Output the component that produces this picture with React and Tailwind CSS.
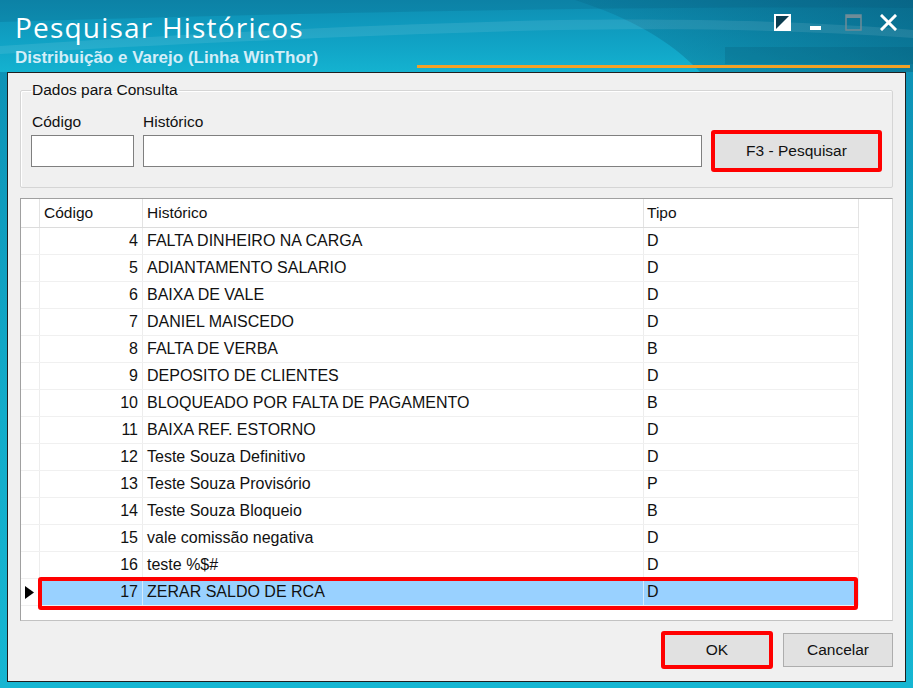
import React from 'react'

const historicos = [
  { cod: 4, desc: 'FALTA DINHEIRO NA CARGA', tipo: 'D' },
  { cod: 5, desc: 'ADIANTAMENTO SALARIO', tipo: 'D' },
  { cod: 6, desc: 'BAIXA DE VALE', tipo: 'D' },
  { cod: 7, desc: 'DANIEL MAISCEDO', tipo: 'D' },
  { cod: 8, desc: 'FALTA DE VERBA', tipo: 'B' },
  { cod: 9, desc: 'DEPOSITO DE CLIENTES', tipo: 'D' },
  { cod: 10, desc: 'BLOQUEADO POR FALTA DE PAGAMENTO', tipo: 'B' },
  { cod: 11, desc: 'BAIXA REF. ESTORNO', tipo: 'D' },
  { cod: 12, desc: 'Teste Souza Definitivo', tipo: 'D' },
  { cod: 13, desc: 'Teste Souza Provisório', tipo: 'P' },
  { cod: 14, desc: 'Teste Souza Bloqueio', tipo: 'B' },
  { cod: 15, desc: 'vale comissão negativa', tipo: 'D' },
  { cod: 16, desc: 'teste %$#', tipo: 'D' },
  { cod: 17, desc: 'ZERAR SALDO DE RCA', tipo: 'D' },
]

const selectedCod = 17

function TitleBar() {
  return (
    <div className="relative h-[72px] shrink-0 overflow-hidden">
      {/* faixa azul com os "swooshes" do tema */}
      <svg className="absolute inset-0" width="913" height="72" viewBox="0 0 913 72">
        <defs>
          <linearGradient id="tbBase" x1="0" y1="0" x2="0" y2="1">
            <stop offset="0" stopColor="#0e8db2" />
            <stop offset="0.55" stopColor="#10a1c4" />
            <stop offset="1" stopColor="#14b2d0" />
          </linearGradient>
          <linearGradient id="tbDark" x1="0" y1="0" x2="1" y2="0">
            <stop offset="0" stopColor="#05506f" stopOpacity="0.15" />
            <stop offset="1" stopColor="#05506f" stopOpacity="0.55" />
          </linearGradient>
        </defs>
        <rect width="913" height="72" fill="url(#tbBase)" />
        <path d="M575 0 C 630 18, 670 40, 700 72 L913 72 L913 0 Z" fill="url(#tbDark)" />
        <path d="M0 46 C 180 34, 380 24, 560 20 C 700 18, 820 22, 913 30 L913 38 C 800 30, 690 28, 560 30 C 380 34, 180 44, 0 54 Z" fill="#ffffff" opacity="0.09" />
        <path d="M0 0 L913 0 L913 8 C 700 6, 400 10, 0 22 Z" fill="#04506e" opacity="0.18" />
        <rect x="725" y="47" width="188" height="17" fill="#06506e" opacity="0.22" />
      </svg>

      <div className="relative flex justify-between">
        <div className="pl-[15px] pt-[13px]">
          <h1 className="text-[28px] leading-[28px] text-white tracking-[1.2px] font-['Open_Sans',sans-serif]">
            Pesquisar Históricos
          </h1>
          <p className="mt-[8px] text-[17px] leading-[18px] font-bold text-[#d3eef8] font-['Liberation_Sans',Arial,sans-serif]">
            Distribuição e Varejo (Linha WinThor)
          </p>
        </div>

        <div className="flex items-start pt-[14px] pr-[16px]">
          <svg width="17" height="17" viewBox="0 0 17 17" className="mr-[19px]">
            <rect x="1" y="1" width="15" height="15" fill="#0b3d50" stroke="#fff" strokeWidth="2" />
            <path d="M15 2 L15 15 L2 15 Z" fill="#fff" />
          </svg>
          <svg width="11" height="17" viewBox="0 0 11 17" className="mr-[24px]">
            <rect x="0" y="12" width="11" height="4" fill="#fff" />
          </svg>
          <svg width="17" height="17" viewBox="0 0 17 17" className="mr-[18px]">
            <rect x="1" y="1" width="15" height="15" fill="none" stroke="#6f8c98" strokeWidth="1.5" />
            <rect x="1" y="1" width="15" height="3" fill="#6f8c98" />
          </svg>
          <svg width="17" height="17" viewBox="0 0 17 17">
            <path d="M2 2 L15 15 M15 2 L2 15" stroke="#fff" strokeWidth="3" strokeLinecap="square" />
          </svg>
        </div>
      </div>

      <div className="absolute left-[417px] right-[3px] top-[65px] h-[3px] bg-[#f2a126]" />
    </div>
  )
}

function SearchGroup() {
  return (
    <fieldset className="mx-[12px] mt-[9px] border border-[#d5d5d5] rounded-[2px] pl-[10px] pb-[15px] shadow-[inset_1px_1px_0_#ffffff]">
      <legend className="px-[1px] text-[15.5px] leading-[16px] text-[#111]">Dados para Consulta</legend>
      <div className="mt-[16px] grid grid-cols-[103px_559px_171px] gap-x-[9px] items-center">
        <label className="pl-[1px] text-[15.5px] leading-[16px] text-[#111]">Código</label>
        <label className="text-[15.5px] leading-[16px] text-[#111]">Histórico</label>
        <div />
        <input className="h-[32px] border border-[#7f7f7f] bg-white outline-none" />
        <input className="h-[32px] border border-[#7f7f7f] bg-white outline-none" />
        <button className="h-[42px] border-4 border-[#ff0000] rounded-[3px] bg-[#e1e1e1] text-[15.5px] text-[#111]">
          F3 - Pesquisar
        </button>
      </div>
    </fieldset>
  )
}

function Grid() {
  return (
    <div className="mx-[12px] mt-[10px] h-[423px] border border-t-[#a0a0a0] border-l-[#a0a0a0] border-r-[#d6d6d6] border-b-[#c2c2c2] bg-white text-[16px] text-[#111]">
      <div className="flex h-[29px] w-fit border-b border-[#dcdcdc] text-[15.5px]">
        <div className="w-[19px] border-r border-[#e3e3e3]" />
        <div className="w-[103px] border-r border-[#e3e3e3] pl-[4px] flex items-center">Código</div>
        <div className="w-[501px] border-r border-[#e3e3e3] pl-[4px] flex items-center">Histórico</div>
        <div className="w-[215px] border-r border-[#e3e3e3] pl-[3px] flex items-center">Tipo</div>
      </div>

      {historicos.map((h) => {
        const sel = h.cod === selectedCod
        const cell = sel ? 'bg-[#99d1ff] border-[#d6ebfc]' : 'border-[#ededed]'
        return (
          <div key={h.cod} className="relative flex h-[27px] w-fit border-b border-[#f0f0f0]">
            <div className="w-[19px] border-r border-[#ededed] flex items-center pl-[4px]">
              {sel && (
                <svg width="9" height="13" viewBox="0 0 9 13">
                  <path d="M0 0 L9 6.5 L0 13 Z" fill="#000" />
                </svg>
              )}
            </div>
            <div className={`w-[103px] border-r pr-[4px] flex items-center justify-end ${cell}`}>{h.cod}</div>
            <div className={`w-[501px] border-r pl-[4px] flex items-center ${cell}`}>{h.desc}</div>
            <div className={`w-[215px] border-r pl-[3px] flex items-center ${cell}`}>{h.tipo}</div>
            {sel && (
              <div className="pointer-events-none absolute left-[17px] -top-[2px] w-[820px] h-[33px] border-4 border-[#ff0000] rounded-[3px]" />
            )}
          </div>
        )
      })}
    </div>
  )
}

export default function App() {
  return (
    <div className="w-[913px] h-[688px] flex flex-col overflow-hidden bg-[linear-gradient(180deg,#0c8db2_0%,#12acca_60%,#16b6d2_100%)] font-['Liberation_Sans',Arial,sans-serif]">
      <TitleBar />
      <div className="flex-1 mx-[7px] mb-[6px] border border-[#1f1f1f] bg-[#f0f0f0] flex flex-col">
        <SearchGroup />
        <Grid />
        <div className="mt-[10px] flex items-center justify-end gap-[10px] pr-[12px]">
          <button className="w-[112px] h-[38px] border-4 border-[#ff0000] rounded-[3px] bg-[#e1e1e1] text-[15.5px] text-[#111]">
            OK
          </button>
          <button className="w-[110px] h-[34px] border border-[#adadad] bg-[#e1e1e1] text-[15.5px] text-[#111]">
            Cancelar
          </button>
        </div>
      </div>
    </div>
  )
}
